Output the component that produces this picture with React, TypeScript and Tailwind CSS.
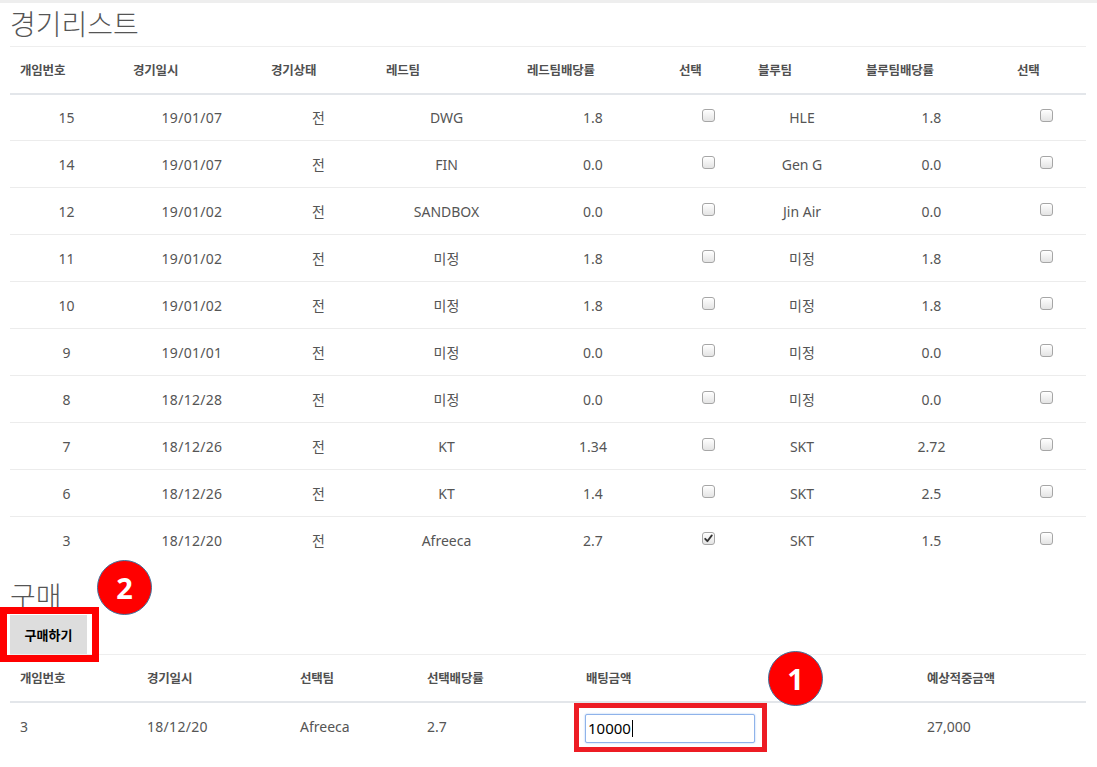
import React from "react";

type Row = [number, string, string, string, string, boolean, string, string, boolean];

const rows: Row[] = [
  [15, "19/01/07", "전", "DWG", "1.8", false, "HLE", "1.8", false],
  [14, "19/01/07", "전", "FIN", "0.0", false, "Gen G", "0.0", false],
  [12, "19/01/02", "전", "SANDBOX", "0.0", false, "Jin Air", "0.0", false],
  [11, "19/01/02", "전", "미정", "1.8", false, "미정", "1.8", false],
  [10, "19/01/02", "전", "미정", "1.8", false, "미정", "1.8", false],
  [9, "19/01/01", "전", "미정", "0.0", false, "미정", "0.0", false],
  [8, "18/12/28", "전", "미정", "0.0", false, "미정", "0.0", false],
  [7, "18/12/26", "전", "KT", "1.34", false, "SKT", "2.72", false],
  [6, "18/12/26", "전", "KT", "1.4", false, "SKT", "2.5", false],
  [3, "18/12/20", "전", "Afreeca", "2.7", true, "SKT", "1.5", false],
];

const FONT = { fontFamily: '"Noto Sans", "Noto Sans CJK KR", sans-serif' };
const KFONT = { fontFamily: '"Noto Sans CJK KR", "Noto Sans", sans-serif' };

function Check({ checked }: { checked: boolean }) {
  return (
    <span className="-mt-[4px] inline-flex h-[13px] w-[13px] items-center justify-center rounded-[3px] border border-[#a6a6a6] bg-gradient-to-b from-[#ffffff] to-[#e4e4e4] shadow-[inset_0_1px_0_#fff]">
      {checked && (
        <svg width="9" height="9" viewBox="0 0 9 9">
          <path d="M1.2 4.8 L3.4 7.2 L7.8 1.4" stroke="#333" strokeWidth="1.8" fill="none" strokeLinecap="round" strokeLinejoin="round" />
        </svg>
      )}
    </span>
  );
}

function Circle({ n, className }: { n: string; className: string }) {
  return (
    <div
      className={`absolute flex h-[55px] w-[55px] items-center justify-center rounded-full border border-[#41719c] bg-[#ff0000] text-[29px] font-bold text-white ${className}`}
      style={FONT}
    >
      {n}
    </div>
  );
}

const th = "flex items-center px-[10px] text-[12.5px] font-bold text-[#505050] tracking-[-0.2px]";

export default function App() {
  const heads1 = ["개임번호", "경기일시", "경기상태", "레드팀", "레드팀배당률", "선택", "블루팀", "블루팀배당률", "선택"];
  const heads2 = ["개임번호", "경기일시", "선택팀", "선택배당률", "배팅금액", "예상적중금액"];
  return (
    <div className="relative min-h-[767px] w-[1097px] bg-white text-[#555]" style={FONT}>
      <div className="h-[3px] bg-[#eeeeee]" />
      <div className="px-[10px]">
        <h2 className="mt-[5px] mb-[7px] text-[28px] font-light leading-[31px] text-[#555]" style={KFONT}>
          경기리스트
        </h2>
        {/* Table 1 */}
        <div className="w-[1076px]">
          <div className="grid h-[49px] grid-cols-[113px_138px_115px_141px_152px_79px_108px_151px_79px] border-t border-b-2 border-t-[#eeeeee] border-b-[#e3e6ea]" style={KFONT}>
            {heads1.map((h, i) => (
              <div key={i} className={th}>{h}</div>
            ))}
          </div>
          {rows.map((r, i) => (
            <div
              key={i}
              className={`grid grid-cols-[113px_138px_115px_141px_152px_79px_108px_151px_79px] text-[14px] text-[#555] ${i === 0 ? "h-[45px]" : "h-[47px] border-t border-[#ececec]"}`}
            >
              <div className="flex items-center justify-center">{r[0]}</div>
              <div className="flex items-center justify-center tracking-[0.3px]">{r[1]}</div>
              <div className="flex items-center justify-center" style={KFONT}>{r[2]}</div>
              <div className="flex items-center justify-center">{r[3]}</div>
              <div className="flex items-center justify-center">{r[4]}</div>
              <div className="flex items-center justify-center"><Check checked={r[5]} /></div>
              <div className="flex items-center justify-center">{r[6]}</div>
              <div className="flex items-center justify-center">{r[7]}</div>
              <div className="flex items-center justify-center"><Check checked={r[8]} /></div>
            </div>
          ))}
        </div>

        <h2 className="mt-[17px] mb-[4px] text-[28px] font-light leading-[31px] text-[#555]" style={KFONT}>
          구매
        </h2>
        <button
          className="flex h-[39px] w-[77px] items-center justify-center bg-[#dddddd] text-[13px] font-bold text-black"
          style={KFONT}
        >
          구매하기
        </button>

        {/* Table 2 */}
        <div className="w-[1076px]">
          <div className="grid h-[49px] grid-cols-[127px_153px_127px_159px_341px_169px] border-t border-b-2 border-t-[#eeeeee] border-b-[#e3e6ea]" style={KFONT}>
            {heads2.map((h, i) => (
              <div key={i} className={th}>{h}</div>
            ))}
          </div>
          <div className="grid h-[47px] grid-cols-[127px_153px_127px_159px_341px_169px] text-[14px] text-[#555]">
            <div className="flex items-center px-[10px]">3</div>
            <div className="flex items-center px-[10px] tracking-[0.3px]">18/12/20</div>
            <div className="flex items-center px-[10px]">Afreeca</div>
            <div className="flex items-center px-[10px]">2.7</div>
            <div className="flex items-center px-[9px]">
              <div className="mt-[3px] flex h-[29px] w-[170px] items-center rounded-[2px] border border-[#8fb3ea] bg-white px-[2px] text-[15px] text-black shadow-[0_0_2px_#9dc0f2]">
                <span>10000</span>
                <span className="ml-[1px] inline-block h-[17px] w-[1px] bg-black" />
              </div>
            </div>
            <div className="flex items-center px-[10px]">27,000</div>
          </div>
        </div>
      </div>

      {/* Annotations */}
      <div className="pointer-events-none absolute left-0 top-[607px] h-[55px] w-[99px] border-[7px] border-[#ff0000]" />
      <div className="pointer-events-none absolute left-[574px] top-[703px] h-[49px] w-[193px] border-[5px] border-[#ed1c24]" />
      <Circle n="2" className="left-[97px] top-[560px]" />
      <Circle n="1" className="left-[768px] top-[651px]" />
    </div>
  );
}
